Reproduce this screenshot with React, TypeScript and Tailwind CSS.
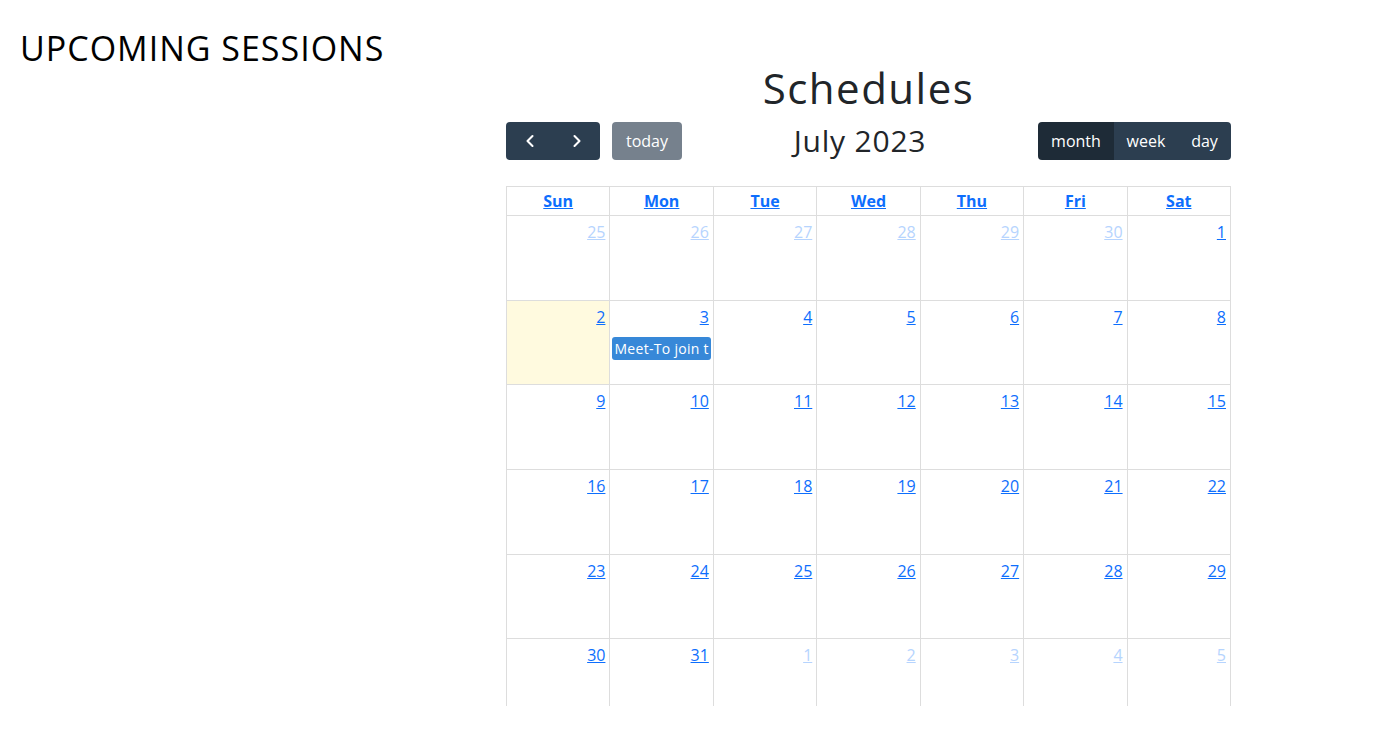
import React from 'react';
import { ChevronLeft, ChevronRight } from 'lucide-react';

const FONT = "font-['Open_Sans',_'Noto_Sans',_sans-serif]";

type Day = { n: number; other?: boolean; today?: boolean };

function buildWeeks(): Day[][] {
  const days: Day[] = [];
  [25, 26, 27, 28, 29, 30].forEach(n => days.push({ n, other: true }));
  for (let n = 1; n <= 31; n++) days.push({ n, today: n === 2 });
  [1, 2, 3, 4, 5].forEach(n => days.push({ n, other: true }));
  const weeks: Day[][] = [];
  for (let i = 0; i < days.length; i += 7) weeks.push(days.slice(i, i + 7));
  return weeks;
}

const DOW = ['Sun', 'Mon', 'Tue', 'Wed', 'Thu', 'Fri', 'Sat'];
const ROW_H = ['h-[85px]', 'h-[84px]', 'h-[85px]', 'h-[85px]', 'h-[84px]', 'h-[85px]'];

function Toolbar() {
  return (
    <div className="flex items-center justify-between h-[38px] mt-[10px]">
      <div className="flex items-center gap-3">
        <div className="flex rounded overflow-hidden">
          <button className="w-[47px] h-[38px] bg-[#2c3e50] text-white flex items-center justify-center">
            <ChevronLeft size={20} strokeWidth={2.5} />
          </button>
          <button className="w-[47px] h-[38px] bg-[#2c3e50] text-white flex items-center justify-center">
            <ChevronRight size={20} strokeWidth={2.5} />
          </button>
        </div>
        <button className="w-[70px] h-[38px] rounded bg-[#76818d] text-white text-base">today</button>
      </div>
      <h2 className="text-[30px] tracking-[0.8px] text-[#212529] leading-none">July 2023</h2>
      <div className="flex rounded overflow-hidden text-white text-base">
        <button className="w-[76px] h-[38px] bg-[#1e2b37]">month</button>
        <button className="w-[64px] h-[38px] bg-[#2c3e50]">week</button>
        <button className="w-[53px] h-[38px] bg-[#2c3e50]">day</button>
      </div>
    </div>
  );
}

function Calendar() {
  const weeks = buildWeeks();
  return (
    <div className="mt-[26px] h-[520px] overflow-hidden">
      <div className="border-l border-t border-[#ddd]">
        <div className="grid grid-cols-7 h-[29px]">
          {DOW.map(d => (
            <div key={d} className="border-r border-b border-[#ddd] flex items-center justify-center">
              <a className="text-[#0d6efd] font-bold underline text-base leading-6 cursor-pointer">{d}</a>
            </div>
          ))}
        </div>
        {weeks.map((w, wi) => (
          <div key={wi} className={`grid grid-cols-7 ${ROW_H[wi]}`}>
            {w.map((d, di) => (
              <div
                key={di}
                className={`border-r border-b border-[#ddd] relative ${d.today ? 'bg-[#fffadf]' : ''}`}
              >
                <div className="flex justify-end px-1 pt-1">
                  <a className={`underline text-base leading-6 cursor-pointer ${d.other ? 'text-[#b6d4fe]' : 'text-[#0d6efd]'}`}>
                    {d.n}
                  </a>
                </div>
                {wi === 1 && di === 1 && (
                  <div className="mx-[2px] mt-[8px] h-[23px] bg-[#3788d8] rounded-[3px] text-white text-[14px] tracking-[0.3px] leading-[23px] px-[2px] whitespace-nowrap overflow-hidden">
                    Meet-To join t
                  </div>
                )}
              </div>
            ))}
          </div>
        ))}
      </div>
    </div>
  );
}

export default function App() {
  return (
    <div className={`min-h-[732px] bg-white flex ${FONT}`}>
      <div className="w-[506px] pl-5 pt-[26px]">
        <h2 className="text-[34px] tracking-[1px] text-black leading-[44px]">UPCOMING SESSIONS</h2>
      </div>
      <div className="w-[725px]">
        <h1 className="text-[42px] tracking-[1.5px] text-[#212529] text-center leading-[48px] mt-[64px] font-medium">Schedules</h1>
        <Toolbar />
        <Calendar />
      </div>
    </div>
  );
}
